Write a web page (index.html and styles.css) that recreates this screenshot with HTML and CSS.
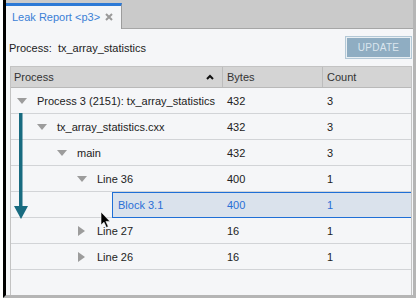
FILE: index.html
```html
<!DOCTYPE html>
<html lang="en">
<head>
    <meta charset="UTF-8">
    <title>Leak Report</title>
    <link rel="stylesheet" href="styles.css">
</head>
<body>
    <div class="window">
        <div class="tabbar">
            <div class="tab">
                <span class="tab-title">Leak Report &lt;p3&gt;</span>
                <svg class="tab-close" width="8" height="8" viewBox="0 0 8 8"><path d="M1 1 L7 7 M7 1 L1 7" stroke="#9a9a9a" stroke-width="2"/></svg>
            </div>
        </div>
        <div class="content">
            <div class="info">
                <span>Process:&nbsp; tx_array_statistics</span>
                <button class="update-btn">UPDATE</button>
            </div>
            <div class="tree">
                <div class="tree-head">
                    <div class="hcell hcell-process">Process
                        <svg width="8" height="6" viewBox="0 0 8 6"><path d="M1 5 L4 2 L7 5" fill="none" stroke="#111" stroke-width="2"/></svg>
                    </div>
                    <div class="hcell">Bytes</div>
                    <div class="hcell hcell-last">Count</div>
                </div>
                <div class="row">
                    <div class="cell name lvl0"><span class="tri-down"></span>Process 3 (2151): tx_array_statistics</div>
                    <div class="cell">432</div>
                    <div class="cell">3</div>
                </div>
                <div class="row">
                    <div class="cell name lvl1"><span class="tri-down"></span>tx_array_statistics.cxx</div>
                    <div class="cell">432</div>
                    <div class="cell">3</div>
                </div>
                <div class="row">
                    <div class="cell name lvl2"><span class="tri-down"></span>main</div>
                    <div class="cell">432</div>
                    <div class="cell">3</div>
                </div>
                <div class="row">
                    <div class="cell name lvl3"><span class="tri-down"></span>Line 36</div>
                    <div class="cell">400</div>
                    <div class="cell">1</div>
                </div>
                <div class="row-selected">
                    <div class="sel-pad"></div>
                    <div class="sel-box">
                        <div class="cell sel-name">Block 3.1</div>
                        <div class="cell">400</div>
                        <div class="cell">1</div>
                    </div>
                </div>
                <div class="row">
                    <div class="cell name lvl3"><span class="tri-right"></span>Line 27</div>
                    <div class="cell">16</div>
                    <div class="cell">1</div>
                </div>
                <div class="row">
                    <div class="cell name lvl3"><span class="tri-right"></span>Line 26</div>
                    <div class="cell">16</div>
                    <div class="cell">1</div>
                </div>
            </div>
        </div>
    </div>

    <!-- annotation arrow and mouse pointer drawn over the tree -->
    <svg class="overlay" width="416" height="298" viewBox="0 0 416 298">
        <rect x="19" y="113" width="3.5" height="96" fill="#186b80"/>
        <polygon points="14,206 28,206 21,219" fill="#186b80"/>
        <polygon points="101,212 101,225 104,222.2 106.4,227.5 108.3,226.6 105.9,221.4 110,221.4" fill="#000" stroke="#fff" stroke-width="0.6"/>
    </svg>
</body>
</html>
```

FILE: styles.css
```css
body {
    margin: 0;
    background: #fff;
    font-family: "Liberation Sans", Arial, sans-serif;
    font-size: 11px;
    color: #222;
    position: relative;
}
.window {
    margin-left: 3px;
    width: 413px;
    height: 298px;
    box-sizing: border-box;
    border-left: 3px solid #000;
    border-right: 3px solid #b5b5b5;
    border-bottom: 3px solid #b5b5b5;
    display: flex;
    flex-direction: column;
    background: #f5f6f8;
}
.tabbar {
    height: 29px;
    box-sizing: border-box;
    background: #cacaca;
    border-bottom: 1px solid #a6a6a6;
    display: flex;
    align-items: flex-end;
}
.tab {
    width: 116px;
    height: 26px;
    box-sizing: border-box;
    margin-bottom: -1px;
    background: #f5f6f8;
    border-top: 3px solid #2c79d6;
    border-right: 1px solid #9c9c9c;
    display: flex;
    align-items: center;
    justify-content: space-between;
    padding: 0 8px 1px 6px;
}
.tab-title {
    color: #3a7fd6;
    font-size: 11px;
}
.content {
    flex: 1;
    display: flex;
    flex-direction: column;
}
.info {
    height: 37px;
    display: flex;
    align-items: center;
    justify-content: space-between;
    padding: 0 1px 0 3px;
}
.update-btn {
    width: 67px;
    height: 23px;
    margin-top: -1px;
    background: #8fadc2;
    border: 1px solid #b3c8d6;
    box-shadow: inset 0 0 0 1px #e9eff3;
    color: #dbe6ee;
    font-family: "Liberation Sans", Arial, sans-serif;
    font-size: 10px;
    letter-spacing: 0.3px;
    padding: 0;
}
.tree {
    flex: 1;
    margin: 0 1px 0 4px;
    border: 1px solid #c3c3c3;
    border-bottom: none;
}
.tree-head {
    display: grid;
    grid-template-columns: 212px 100px 1fr;
    height: 21px;
    box-sizing: border-box;
    background: #d4d4d4;
    border-bottom: 1px solid #b9b9b9;
    color: #333;
}
.hcell {
    border-right: 1px solid #bcbcbc;
    padding-left: 4px;
    display: flex;
    align-items: center;
}
.hcell-process {
    padding-left: 3px;
    padding-right: 8px;
    justify-content: space-between;
}
.hcell-last {
    border-right: none;
}
.row {
    display: grid;
    grid-template-columns: 212px 100px 1fr;
    height: 26px;
    box-sizing: border-box;
    border-bottom: 1px solid #d2d4d7;
}
.cell {
    display: flex;
    align-items: center;
    padding-left: 4px;
    white-space: nowrap;
}
.name {
    padding-left: 5px;
}
.lvl1 { padding-left: 25px; }
.lvl2 { padding-left: 45px; }
.lvl3 { padding-left: 65px; }
.tri-down, .tri-right {
    width: 11px;
    margin-right: 10px;
    display: flex;
    justify-content: center;
}
.tri-down::before {
    content: "";
    border-left: 5.5px solid transparent;
    border-right: 5.5px solid transparent;
    border-top: 6px solid #9c9c9c;
}
.tri-right::before {
    content: "";
    border-top: 5px solid transparent;
    border-bottom: 5px solid transparent;
    border-left: 7px solid #9c9c9c;
}
.row-selected {
    display: flex;
    height: 26px;
}
.sel-pad {
    width: 101px;
    border-bottom: 1px solid #d2d4d7;
}
.sel-box {
    flex: 1;
    display: grid;
    grid-template-columns: 110px 100px 1fr;
    box-sizing: border-box;
    background: #dae2ec;
    border: 1px solid #1f6fd6;
    border-right: none;
    color: #2a6fd6;
}
.sel-name {
    padding-left: 5px;
}
.overlay {
    position: absolute;
    left: 0;
    top: 0;
    pointer-events: none;
}
```
